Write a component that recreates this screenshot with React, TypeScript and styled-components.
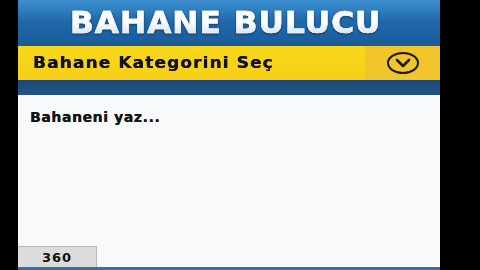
import React from "react";
import styled, { createGlobalStyle } from "styled-components";

const GlobalStyle = createGlobalStyle`
  html, body {
    margin: 0;
    padding: 0;
    background: #000;
  }
  * {
    box-sizing: border-box;
  }
`;

const Page = styled.div`
  display: flex;
  width: 480px;
  height: 270px;
  padding-left: 18px;
  background: #000;
  font-family: "DejaVu Sans", "Liberation Sans", sans-serif;
`;

const Screen = styled.div`
  display: flex;
  flex-direction: column;
  width: 422px;
  height: 270px;
  background: #f7f8fa;
`;

const Header = styled.div`
  display: flex;
  align-items: center;
  justify-content: center;
  height: 46px;
  padding-right: 6px;
  background: linear-gradient(
    to bottom,
    #3d8fcf 0%,
    #2f7fc0 22%,
    #2169ab 45%,
    #1d62a2 75%,
    #1a5b98 100%
  );
`;

const Title = styled.h1`
  margin: 0;
  font-size: 30px;
  font-weight: bold;
  letter-spacing: 1px;
  line-height: 1;
  color: #f2f7fc;
  transform: scaleX(1.04);
  background: linear-gradient(to bottom, #ffffff 0%, #ffffff 45%, #c8ddef 100%);
  -webkit-background-clip: text;
  background-clip: text;
  -webkit-text-fill-color: transparent;
  -webkit-text-stroke: 0.6px #eef5fb;
  filter: drop-shadow(0 1px 1px rgba(10, 40, 80, 0.7));
`;

const CategoryBar = styled.div`
  display: flex;
  height: 34px;
  background: linear-gradient(to bottom, #f9d81c, #f6cf15);
`;

const CategoryLabel = styled.div`
  flex: 1;
  display: flex;
  align-items: center;
  padding-left: 15px;
`;

const CategoryText = styled.span`
  display: inline-block;
  font-size: 15px;
  font-weight: bold;
  letter-spacing: 1px;
  color: #111;
  text-shadow: 0.3px 0 0 #111;
  transform: scaleX(1.13);
  transform-origin: left center;
`;

const Toggle = styled.button`
  display: flex;
  align-items: center;
  justify-content: center;
  width: 75px;
  height: 100%;
  padding: 0;
  border: none;
  background: #f1c52a;
  cursor: pointer;
`;

const Strip = styled.div`
  height: 15px;
  background: linear-gradient(to bottom, #1b4877, #245386);
`;

const Content = styled.div`
  flex: 1;
  display: flex;
  flex-direction: column;
  background: #f8f9fb;
`;

const Placeholder = styled.div`
  padding: 14px 0 0 12px;
  font-size: 14px;
  font-weight: bold;
  letter-spacing: 0.6px;
  color: #151515;
  text-shadow: 0.2px 0 0 #151515;
`;

const Counter = styled.div`
  display: flex;
  align-items: center;
  justify-content: center;
  width: 79px;
  height: 21px;
  margin-top: auto;
  background: #dcdcdc;
  border: 1px solid #b9b9b9;
  border-left: none;
  border-bottom: none;
  font-size: 13px;
  font-weight: bold;
  letter-spacing: 1px;
  color: #111;
`;

const BottomLine = styled.div`
  height: 3px;
  background: #3d6d9c;
`;

function ChevronCircle() {
  return (
    <svg width="34" height="24" viewBox="0 0 34 24">
      <ellipse cx="17" cy="12" rx="15" ry="10" fill="none" stroke="#1e1a10" strokeWidth="2" />
      <polyline
        points="11,9 17,15 23,9"
        fill="none"
        stroke="#1e1a10"
        strokeWidth="2.6"
        strokeLinecap="round"
        strokeLinejoin="round"
      />
    </svg>
  );
}

export default function App() {
  return (
    <>
      <GlobalStyle />
      <Page>
        <Screen>
          <Header>
            <Title>BAHANE BULUCU</Title>
          </Header>
          <CategoryBar>
            <CategoryLabel>
              <CategoryText>Bahane Kategorini Seç</CategoryText>
            </CategoryLabel>
            <Toggle aria-label="Kategori seç">
              <ChevronCircle />
            </Toggle>
          </CategoryBar>
          <Strip />
          <Content>
            <Placeholder>Bahaneni yaz...</Placeholder>
            <Counter>360</Counter>
          </Content>
          <BottomLine />
        </Screen>
      </Page>
    </>
  );
}
